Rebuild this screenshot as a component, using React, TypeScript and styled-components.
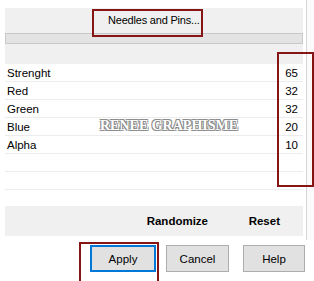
import React from 'react';
import styled, { createGlobalStyle } from 'styled-components';

const GlobalStyle = createGlobalStyle`
  html, body {
    margin: 0;
    padding: 0;
    background: #ffffff;
    font-family: "Liberation Sans", Arial, sans-serif;
    font-size: 11.5px;
    color: #000;
  }
`;

const Frame = styled.div`
  position: relative;
  width: 314px;
  height: 281px;
  overflow: hidden;
  display: flex;
  flex-direction: column;
`;

const Upper = styled.div`
  display: flex;
  height: 240px;
`;

const Panel = styled.div`
  width: 299px;
  margin-left: 5px;
  padding-top: 8px;
  display: flex;
  flex-direction: column;
`;

const Scroll = styled.div`
  margin-left: 3px;
  width: 7px;
  border-left: 1px solid #d6d6d6;
  background: #fafafa;
`;

const Header = styled.div`
  background: #f0f0f0;
  height: 56px;
  display: flex;
  flex-direction: column;
`;

const PresetName = styled.div`
  height: 25px;
  line-height: 24px;
  padding-left: 103px;
  font-size: 11px;
  letter-spacing: -0.2px;
`;

const Bar = styled.div`
  height: 9px;
  border: 1px solid #c9c9c9;
  background: #e3e3e3;
`;

const Row = styled.div<{ $line?: boolean }>`
  height: 17px;
  display: flex;
  align-items: center;
  justify-content: space-between;
  padding: 0 5px 0 2px;
  border-bottom: 1px solid ${p => (p.$line ? '#ececec' : 'transparent')};
`;

const Spacer = styled.div`
  height: 16px;
`;

const ActionBar = styled.div`
  background: #f0f0f0;
  height: 30px;
  display: flex;
  align-items: center;
  font-weight: bold;
  font-size: 11.5px;
`;

const Action = styled.span<{ $w: number }>`
  width: ${p => p.$w}px;
  text-align: right;
`;

const Footer = styled.div`
  display: flex;
  padding: 5px 0 0 90px;
`;

const Button = styled.button<{ $focus?: boolean; $w: number; $gap?: number }>`
  width: ${p => p.$w}px;
  height: 27px;
  margin-right: ${p => p.$gap || 0}px;
  font-family: "Liberation Sans", Arial, sans-serif;
  font-size: 11.5px;
  color: #000;
  background: #e1e1e1;
  border: ${p => (p.$focus ? '2px solid #0078d7' : '1px solid #adadad')};
  padding: 0;
`;

const Mark = styled.div<{ $x: number; $y: number; $w: number; $h: number }>`
  position: absolute;
  left: ${p => p.$x}px;
  top: ${p => p.$y}px;
  width: ${p => p.$w}px;
  height: ${p => p.$h}px;
  box-sizing: border-box;
  border: 2px solid #861616;
  pointer-events: none;
`;

const Watermark = styled.div`
  position: absolute;
  left: 100px;
  top: 118px;
  font-family: "Liberation Serif", "Times New Roman", serif;
  font-size: 14px;
  font-weight: bold;
  color: #ffffff;
  text-shadow: -1px -1px 0 #8c8c8c, 1px -1px 0 #8c8c8c, -1px 1px 0 #8c8c8c, 1px 1px 0 #9a9a9a;
  pointer-events: none;
`;

const params = [
  { name: 'Strenght', value: 65 },
  { name: 'Red', value: 32 },
  { name: 'Green', value: 32 },
  { name: 'Blue', value: 20 },
  { name: 'Alpha', value: 10 },
  { name: '', value: null },
  { name: '', value: null },
];

export default function App() {
  return (
    <Frame>
      <GlobalStyle />
      <Upper>
        <Panel>
          <Header>
            <PresetName>Needles and Pins...</PresetName>
            <Bar />
          </Header>
          {params.map((p, i) => (
            <Row key={i} $line>
              <span>{p.name}</span>
              <span>{p.value}</span>
            </Row>
          ))}
          <Spacer />
          <ActionBar>
            <Action $w={203}>Randomize</Action>
            <Action $w={72}>Reset</Action>
          </ActionBar>
        </Panel>
        <Scroll />
      </Upper>
      <Footer>
        <Button $focus $w={66} $gap={10}>Apply</Button>
        <Button $w={63} $gap={14}>Cancel</Button>
        <Button $w={62}>Help</Button>
      </Footer>
      <Watermark>RENEE GRAPHISME</Watermark>
      <Mark $x={92} $y={9} $w={111} $h={28} />
      <Mark $x={277} $y={52} $w={37} $h={135} />
      <Mark $x={79} $y={242} $w={80} $h={42} />
    </Frame>
  );
}
